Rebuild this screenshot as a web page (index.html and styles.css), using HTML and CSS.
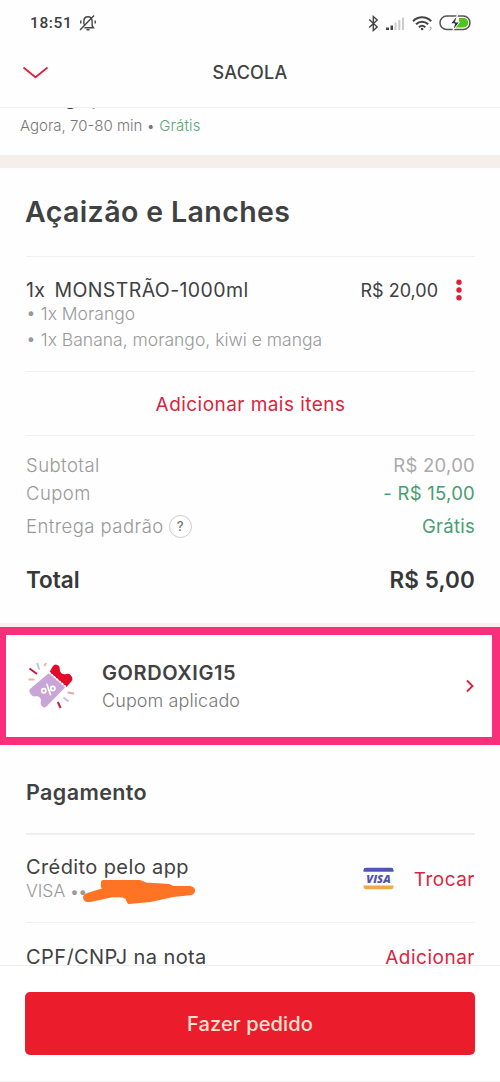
FILE: index.html
```html
<!DOCTYPE html>
<html lang="pt-BR">
<head>
<meta charset="utf-8">
<meta name="viewport" content="width=device-width, initial-scale=1">
<title>Sacola</title>
<link rel="stylesheet" href="styles.css">
</head>
<body>
<div class="screen">
  <div class="status">
    <span class="clock">18:51</span>
    <svg class="bell" width="18" height="18" viewBox="0 0 18 18" fill="none" stroke="#444" stroke-width="1.4">
      <path d="M5.500 13.700h9l-1.400-2V7.200C13.100 4.500 11.500 2.800 9 2.800S4.900 4.500 4.900 7.200v3.300M7.500 15.700h3M1 16 15 1.500M1.800 9.500V6.500M16.200 9.500V6.500"/>
    </svg>
    <div class="status-icons">
      <svg width="11" height="17" viewBox="0 0 11 17" fill="none" stroke="#444" stroke-width="1.4"><path d="m1.200 4.500 8 7.500-3.900 3.500v-14L9.200 5l-8 7.500"/></svg>
      <svg class="signal" width="20" height="15" viewBox="0 0 20 15"><path fill="#444" d="M1 11.500h3V14H1zM5.500 9.500H8V14H5.500z"/><path fill="#ccc" d="M9.500 6.500h2V14h-2zM13.300 4h2v10h-2zM17 1.500h2V14h-2z"/></svg>
      <svg class="wifi" width="21" height="17" viewBox="0 0 21 17" fill="none" stroke="#444" stroke-width="2"><path d="M1 6.200c5.200-5.200 13-5.200 18.200 0M4 9.300c3.600-3.500 8.600-3.500 12.200 0M6.900 12.200c2-1.800 4.400-1.800 6.400 0"/><circle cx="10.100" cy="14" r="1.300" fill="#444" stroke="none"/><path stroke="#999" stroke-width="1" d="M17.500 12.200h1.500v1.500l-1.300 1.800"/></svg>
      <svg class="battery" width="32" height="16" viewBox="0 0 32 16"><rect x="1" y="1" width="30" height="13.500" rx="6.700" fill="#fff" stroke="#555" stroke-width="1.500"/><path fill="#4fc516" d="M20 3h4.500a4.700 4.700 0 0 1 0 9.500H16l4-5z"/><path fill="#333" stroke="#fff" stroke-width="1" d="M18.500 0 11.500 8.800h4L14 15.500l6.500-8.500h-4z"/></svg>
    </div>
  </div>
  <header class="nav">
    <svg width="28" height="16" viewBox="0 0 28 16" fill="none" stroke="#dc2440" stroke-width="1.800"><path d="m2.500 2.500 12 9.800L26.500 2.500"/></svg>
    <h1>SACOLA</h1>
  </header>

  <main class="content">
    <section class="delivery">
      <div class="delivery-title">Entrega padrão</div>
      <p>Agora, 70-80 min • <span class="delivery-free">Grátis</span></p>
    </section>

    <h2 class="store">Açaizão e Lanches</h2>

    <section class="item">
      <div class="item-head">
        <span class="item-name"><span>1x</span><span>MONSTRÃO-1000ml</span></span>
        <span class="item-price">R$ 20,00</span>
        <svg width="8" height="22" viewBox="0 0 8 22" fill="#dc2038"><circle cx="4" cy="3.300" r="2.700"/><circle cx="4" cy="11" r="2.700"/><circle cx="4" cy="18.700" r="2.700"/></svg>
      </div>
      <p class="extra">• 1x Morango</p>
      <p class="extra">• 1x Banana, morango, kiwi e manga</p>
    </section>

    <a class="more">Adicionar mais itens</a>

    <section class="summary">
      <div class="sum"><span>Subtotal</span><span class="amount">R$ 20,00</span></div>
      <div class="sum"><span>Cupom</span><span class="amount green">- R$ 15,00</span></div>
      <div class="sum fee"><span>Entrega padrão</span><i class="help">?</i><span class="amount green">Grátis</span></div>
      <div class="total"><span>Total</span><span class="total-value">R$ 5,00</span></div>
    </section>

    <section class="coupon">
      <svg class="ticket" width="50" height="50" viewBox="0 0 50 50">
        <path fill="#c8a5d6" d="M23 12 4.500 27.500Q2.500 29.500 4 32l1.500 2q1.500 2 3.500 1.300c4-.8 6.800 2 5.800 5.700-.4 2 0 3.300 1.500 4.500 2 1.500 3.200 1 4.700-.5L39.500 26z"/>
        <path fill="#e40929" d="m23.500 11 3.500-6q1.800-2.500 4.500-1c1.700 1 2.200 2 2.200 3.700 0 4 3 6.500 6.800 5.300 2-.6 3.500 0 4.800 2 1.500 2 1.500 3.600.2 5.200L40.500 26z"/>
        <path fill="none" stroke="#fff" stroke-width="1.800" stroke-dasharray="2 1.300" d="M23 11.500 40 26"/>
        <g fill="none" stroke="#fff" stroke-width="1.700"><circle cx="17.800" cy="29.800" r="2.100"/><circle cx="26.800" cy="27.500" r="2.100"/><path d="m20.700 22.800 4 11.500"/></g>
        <g fill="none" stroke-width="2"><path stroke="#cf1942" d="m3.500 7.500 7.500 5.500M31.800 41l2.800 6"/><path stroke="#c6c0df" d="m11 2 2.300 6.500M37.500 36.500l5 4"/><path stroke="#e7b9a0" d="M2.500 18.500h6M20 2l-1.500 3"/><path stroke="#e7a9a4" d="m41.500 31.500 6.500 1"/></g>
      </svg>
      <div class="coupon-text">
        <strong>GORDOXIG15</strong>
        <span>Cupom aplicado</span>
      </div>
      <svg class="go" width="10" height="14" viewBox="0 0 10 14" fill="none" stroke="#d9233f" stroke-width="1.900"><path d="m2 1.500 5.500 5.500L2 12.500"/></svg>
    </section>

    <h3 class="pay-title">Pagamento</h3>

    <section class="method">
      <div class="method-text">
        <span class="method-name">Crédito pelo app</span>
        <span class="card">VISA <b>••</b></span>
        <svg class="scribble" width="115" height="29" viewBox="0 0 115 29"><path fill="#ff7424" stroke="#ff7424" stroke-width="4" stroke-linejoin="round" d="M3 20.500Q3.500 18.500 6 18L22 13q-2-4-1-8h37l6 2.500 23 1.500 4 2h17q3.500 1 3 3t-3 2.300L91 18l-23 5-21 2-2-4.500-4-2-10-.5-23 5Q3 23.500 3 20.500z"/></svg>
      </div>
      <svg class="visa" width="31" height="23" viewBox="0 0 32 23"><rect x=".5" y=".5" width="31" height="22" rx="2.500" fill="#fdfcfe"/><path fill="#5155b8" d="M.5 4.500V3Q.5.500 3 .500h26q2.500 0 2.500 2.500v1.500z"/><path fill="#eeaa43" d="M.5 18.800v1.200q0 2.500 2.500 2.500h26q2.500 0 2.500-2.500v-1.200z"/><text x="16" y="16" text-anchor="middle" class="visa-word">VISA</text></svg>
      <a class="change">Trocar</a>
    </section>

    <section class="tax"><span>CPF/CNPJ na nota</span><a class="add">Adicionar</a></section>
  </main>

  <footer class="footer"><button>Fazer pedido</button></footer>
</div>
</body>
</html>
```
FILE: styles.css
```css
* { box-sizing: border-box; }
body, h1, h2, h3, p { margin: 0; }
body { background: #fefefe; font-family: Inter, "Liberation Sans", sans-serif; color: #404142; }
svg { display: block; flex: none; }
.screen { width: 500px; height: 1082px; display: flex; flex-direction: column; overflow: hidden; border-bottom: 1px solid #f3f3f3; }
.screen > * { flex: none; }

.status { height: 46px; padding: 0 29px 0 30px; display: flex; align-items: center; }
.clock { font: 500 15.500px/20px Roboto, sans-serif; letter-spacing: .6px; }
.bell { margin-left: 7px; }
.status-icons { margin-left: auto; display: flex; align-items: center; }
.signal { margin-left: 6px; }
.wifi { margin-left: 7px; }
.battery { margin-left: 6px; }

.nav { height: 62px; border-bottom: 1px solid #f0f0f0; padding: 0 21px 8px; display: grid; grid-template-columns: 28px 1fr 28px; align-items: center; }
.nav h1 { font-size: 18px; line-height: 24px; font-weight: 500; text-align: center; letter-spacing: .2px; }

.content { height: 857px; overflow: hidden; display: flex; flex-direction: column; }
.content > * { flex: none; }
.delivery { height: 60px; overflow: hidden; border-bottom: 13px solid #f6eeeb; padding-left: 20px; }
.delivery-title { font-size: 18px; line-height: 24px; margin-top: -21px; font-weight: 500; }
.delivery p { font-size: 15px; line-height: 24px; color: #777; font-weight: 300; margin-top: 3px; }
.delivery-free { color: #5aa478; letter-spacing: .15px; }

.store { height: 88px; margin: 0 25px; font-size: 28.500px; line-height: 88px; font-weight: 600; letter-spacing: .4px; white-space: nowrap; }

.item { height: 116px; margin: 0 25px 0 26px; border-top: 1px solid #f0f0ee; border-bottom: 1px solid #f0f0ee; padding-top: 22px; }
.item-head { height: 22px; display: flex; align-items: center; font-size: 19.500px; line-height: 22px; }
.item-name { display: flex; gap: 9px; letter-spacing: .4px; }
.item-price { margin-left: auto; margin-right: 17px; padding-top: 1px; font-size: 18px; }
.item-head svg { margin-right: 12px; }
.extra { font-size: 17.500px; line-height: 26px; font-weight: 300; color: #999; white-space: nowrap; }

.more { height: 64px; margin: 0 25px 0 26px; border-bottom: 1px solid #f0f0ee; line-height: 65px; text-align: center; font-size: 19px; letter-spacing: .45px; color: #dc2440; }

.summary { height: 191px; padding: 15px 25px 0 26px; border-bottom: 4px solid #f5f0ee; }
.sum { display: flex; align-items: center; height: 28px; font-size: 18.500px; font-weight: 300; letter-spacing: .45px; color: #999; }
.fee { height: 38px; }
.amount { margin-left: auto; font-weight: 400; letter-spacing: .25px; color: #aaa; }
.amount.green { color: #4a9d70; }
.help { width: 23px; height: 23px; margin-left: 5px; border: 1px solid #ccc; border-radius: 50%; font: 500 13px/21px Inter, sans-serif; letter-spacing: 0; text-align: center; color: #777; }
.total { height: 68px; display: flex; justify-content: space-between; align-items: center; font-size: 22.500px; font-weight: 600; color: #363738; }
.total-value { letter-spacing: .1px; }

.coupon { height: 118px; border: solid #fa2f7b; border-width: 8px 8px 8px 6px; display: flex; align-items: center; padding: 0 17px 0 20px; background: #fff; }
.coupon-text { margin: 2px 0 0 26px; display: flex; flex-direction: column; line-height: 27px; }
.coupon-text strong { font-size: 20px; font-weight: 600; letter-spacing: .6px; }
.coupon-text span { font-size: 18px; font-weight: 300; letter-spacing: .1px; color: #777; }
.go { margin-left: auto; }

.pay-title { height: 90px; margin: 0 25px 0 26px; padding-top: 33px; border-bottom: 2px solid #eeeeec; font-size: 21.500px; line-height: 28px; font-weight: 600; letter-spacing: .4px; }
.method { height: 88px; margin: 0 25px 0 26px; display: flex; align-items: center; border-bottom: 1px solid #f0f0ee; }
.method-text { position: relative; display: flex; flex-direction: column; height: 48px; margin-top: 1px; line-height: 24px; }
.method-name { font-size: 20px; letter-spacing: .4px; }
.card { font-size: 17.500px; font-weight: 300; color: #999; }
.card b { font-size: 15px; font-weight: 400; }
.scribble { position: absolute; left: 56px; top: 22px; }
.visa { margin-left: auto; margin-right: 20px; }
.visa-word { font: italic 800 11.500px "Open Sans", sans-serif; fill: #5155ac; }
.change, .add { color: #dc2440; font-size: 19px; letter-spacing: .5px; padding-top: 1px; }
.tax { height: 68px; margin: 0 25px 0 26px; display: flex; justify-content: space-between; align-items: center; font-size: 20px; letter-spacing: .4px; }

.footer { height: 117px; border-top: 1px solid #eee; padding: 26px 25px; background: #fff; }
.footer button { display: block; width: 100%; height: 63px; border: 0; border-radius: 5px; background: #eb1d2c; color: #fde2cf; font: 500 20px/62px Inter, sans-serif; letter-spacing: .15px; padding: 0; }
```
